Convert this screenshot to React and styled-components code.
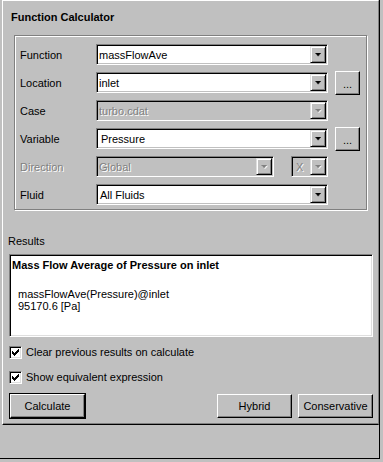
import React from 'react'
import styled, { createGlobalStyle } from 'styled-components'

const GlobalStyle = createGlobalStyle`
  body {
    margin: 0;
    background: #c0c0c0;
    font-family: "Liberation Sans", Arial, sans-serif;
    font-size: 11px;
    color: #000;
  }
`

// window chrome
const Window = styled.div`
  width: 383px;
  height: 462px;
  background: #c0c0c0;
  overflow: hidden;
`
const Frame = styled.div`
  width: 380px;
  height: 459px;
  box-sizing: border-box;
  border-right: 1px solid #000;
  border-bottom: 1px solid #000;
`
const Panel = styled.div`
  margin-left: 2px;
  width: 377px;
  height: 425px;
  box-sizing: border-box;
  border-top: 1px solid #fff;
  border-left: 1px solid #fff;
  border-right: 1px solid #808080;
  border-bottom: 1px solid #000;
  box-shadow: inset 0 -1px #808080;
  display: flex;
  flex-direction: column;
`
const Title = styled.div`
  margin: 9px 0 0 8px;
  line-height: 14px;
  font-weight: bold;
`

// etched group box
const Group = styled.div`
  margin: 11px 0 0 11px;
  width: 353px;
  height: 175px;
  box-sizing: border-box;
  border: 1px solid #808080;
  box-shadow: inset 1px 1px #fff, 1px 1px #fff;
  padding: 8px 0 0 5px;
  display: flex;
  flex-direction: column;
  gap: 7px;
`
const Row = styled.div`
  display: flex;
  align-items: flex-start;
  height: 21px;
`
const Label = styled.div`
  width: 76px;
  flex: none;
  box-sizing: border-box;
  padding-top: 2px;
  line-height: 19px;
  color: ${p => (p.$disabled ? '#808080' : '#000')};
  text-shadow: ${p => (p.$disabled ? '1px 1px 0 #fff' : 'none')};
`
const Combo = styled.div`
  display: flex;
  flex: none;
  width: ${p => p.$width}px;
  height: 21px;
  box-sizing: border-box;
  margin-left: ${p => p.$gap || 0}px;
  border: 1px solid;
  border-color: #808080 #fff #fff #808080;
  box-shadow: inset 1px 1px #000, inset -1px -1px #c0c0c0;
  padding: 1px;
  background: ${p => (p.$disabled ? '#c0c0c0' : '#fff')};
`
const Value = styled.div`
  flex: 1;
  overflow: hidden;
  white-space: nowrap;
  padding: 1px 0 0 ${p => p.$indent || 1}px;
  line-height: 16px;
  color: ${p => (p.$disabled ? '#808080' : '#000')};
  text-shadow: ${p => (p.$disabled ? '1px 1px 0 #fff' : 'none')};
`
const ArrowButton = styled.div`
  width: 16px;
  height: 17px;
  flex: none;
  box-sizing: border-box;
  border: 1px solid;
  border-color: #dfdfdf #000 #000 #dfdfdf;
  box-shadow: inset 1px 1px #fff, inset -1px -1px #808080;
  background: #c0c0c0;
  display: flex;
  align-items: center;
  justify-content: center;
  padding-top: 1px;
`
const DotsButton = styled.div`
  margin: -1px 0 0 7px;
  width: 25px;
  height: 24px;
  flex: none;
  box-sizing: border-box;
  border: 1px solid;
  border-color: #fff #000 #000 #fff;
  box-shadow: inset -1px -1px #808080;
  display: flex;
  align-items: center;
  justify-content: center;
  padding-top: 2px;
  line-height: 14px;
`

// results
const SectionLabel = styled.div`
  margin: 24px 0 0 5px;
  line-height: 14px;
`
const ResultsBox = styled.div`
  margin: 6px 0 0 6px;
  width: 364px;
  height: 83px;
  box-sizing: border-box;
  border: 1px solid;
  border-color: #808080 #fff #fff #808080;
  box-shadow: inset 1px 1px #000, inset -1px -1px #dfdfdf;
  background: #fff;
  padding: 4px 2px;
`
const ResultTitle = styled.div`
  font-weight: bold;
  line-height: 13px;
`
const ResultLines = styled.div`
  margin-top: 16px;
  padding-left: 6px;
  line-height: 12px;
`

const CheckRow = styled.label`
  display: flex;
  align-items: center;
  gap: 4px;
  height: 13px;
  margin: ${p => p.$top}px 0 0 6px;
  line-height: 13px;
`
const CheckBox = styled.span`
  width: 13px;
  height: 13px;
  flex: none;
  box-sizing: border-box;
  border: 1px solid;
  border-color: #808080 #fff #fff #808080;
  box-shadow: inset 1px 1px #000, inset -1px -1px #dfdfdf;
  background: #fff;
  display: flex;
  align-items: center;
  justify-content: center;
`

const ButtonRow = styled.div`
  margin: 9px 0 0 6px;
  width: 364px;
  height: 26px;
  display: flex;
  align-items: center;
  justify-content: space-between;
`
const ButtonGroup = styled.div`
  display: flex;
  gap: 6px;
`
const Button = styled.div`
  width: 75px;
  height: 24px;
  box-sizing: border-box;
  margin-left: ${p => (p.$default ? 1 : 0)}px;
  border: 1px solid;
  border-color: #fff #000 #000 #fff;
  box-shadow: inset -1px -1px #808080 ${p => (p.$default ? ', 0 0 0 1px #000' : '')};
  display: flex;
  align-items: center;
  justify-content: center;
  line-height: 14px;
`

const Arrow = ({ disabled }) => (
  <svg width="7" height="4" viewBox="0 0 8 5" style={{ overflow: 'visible' }}>
    {disabled && (
      <path d="M1 1h7v1h-1v1h-1v1h-1v1h-1v-1h-1v-1h-1v-1h-1z" fill="#fff" />
    )}
    <path
      d="M0 0h7v1h-1v1h-1v1h-1v1h-1v-1h-1v-1h-1v-1h-1z"
      fill={disabled ? '#808080' : '#000'}
    />
  </svg>
)

const Check = () => (
  <svg width="7" height="7" viewBox="0 0 7 7">
    <path
      d="M0 2h1v3H0z M1 3h1v3H1z M2 4h1v3H2z M3 3h1v3H3z M4 2h1v3H4z M5 1h1v3H5z M6 0h1v3H6z"
      fill="#000"
    />
  </svg>
)

const Select = ({ width, value, disabled, gap, indent }) => (
  <Combo $width={width} $disabled={disabled} $gap={gap}>
    <Value $disabled={disabled} $indent={indent}>{value}</Value>
    <ArrowButton>
      <Arrow disabled={disabled} />
    </ArrowButton>
  </Combo>
)

const App = () => {
  return (
    <Window>
      <GlobalStyle />
      <Frame>
        <Panel>
          <Title>Function Calculator</Title>
          <Group>
            <Row>
              <Label>Function</Label>
              <Select width={232} value="massFlowAve" />
            </Row>
            <Row>
              <Label>Location</Label>
              <Select width={232} value="inlet" />
              <DotsButton>...</DotsButton>
            </Row>
            <Row>
              <Label>Case</Label>
              <Select width={232} value="turbo.cdat" disabled />
            </Row>
            <Row>
              <Label>Variable</Label>
              <Select width={232} value="Pressure" indent={3} />
              <DotsButton>...</DotsButton>
            </Row>
            <Row>
              <Label $disabled>Direction</Label>
              <Select width={178} value="Global" disabled />
              <Select width={37} value="X" disabled gap={17} indent={3} />
            </Row>
            <Row>
              <Label>Fluid</Label>
              <Select width={232} value="All Fluids" indent={2} />
            </Row>
          </Group>

          <SectionLabel>Results</SectionLabel>
          <ResultsBox>
            <ResultTitle>Mass Flow Average of Pressure on inlet</ResultTitle>
            <ResultLines>
              <div>massFlowAve(Pressure)@inlet</div>
              <div>95170.6 [Pa]</div>
            </ResultLines>
          </ResultsBox>

          <CheckRow $top={9}>
            <CheckBox><Check /></CheckBox>
            Clear previous results on calculate
          </CheckRow>
          <CheckRow $top={12}>
            <CheckBox><Check /></CheckBox>
            Show equivalent expression
          </CheckRow>

          <ButtonRow>
            <Button $default>Calculate</Button>
            <ButtonGroup>
              <Button>Hybrid</Button>
              <Button>Conservative</Button>
            </ButtonGroup>
          </ButtonRow>
        </Panel>
      </Frame>
    </Window>
  )
}

export default App
